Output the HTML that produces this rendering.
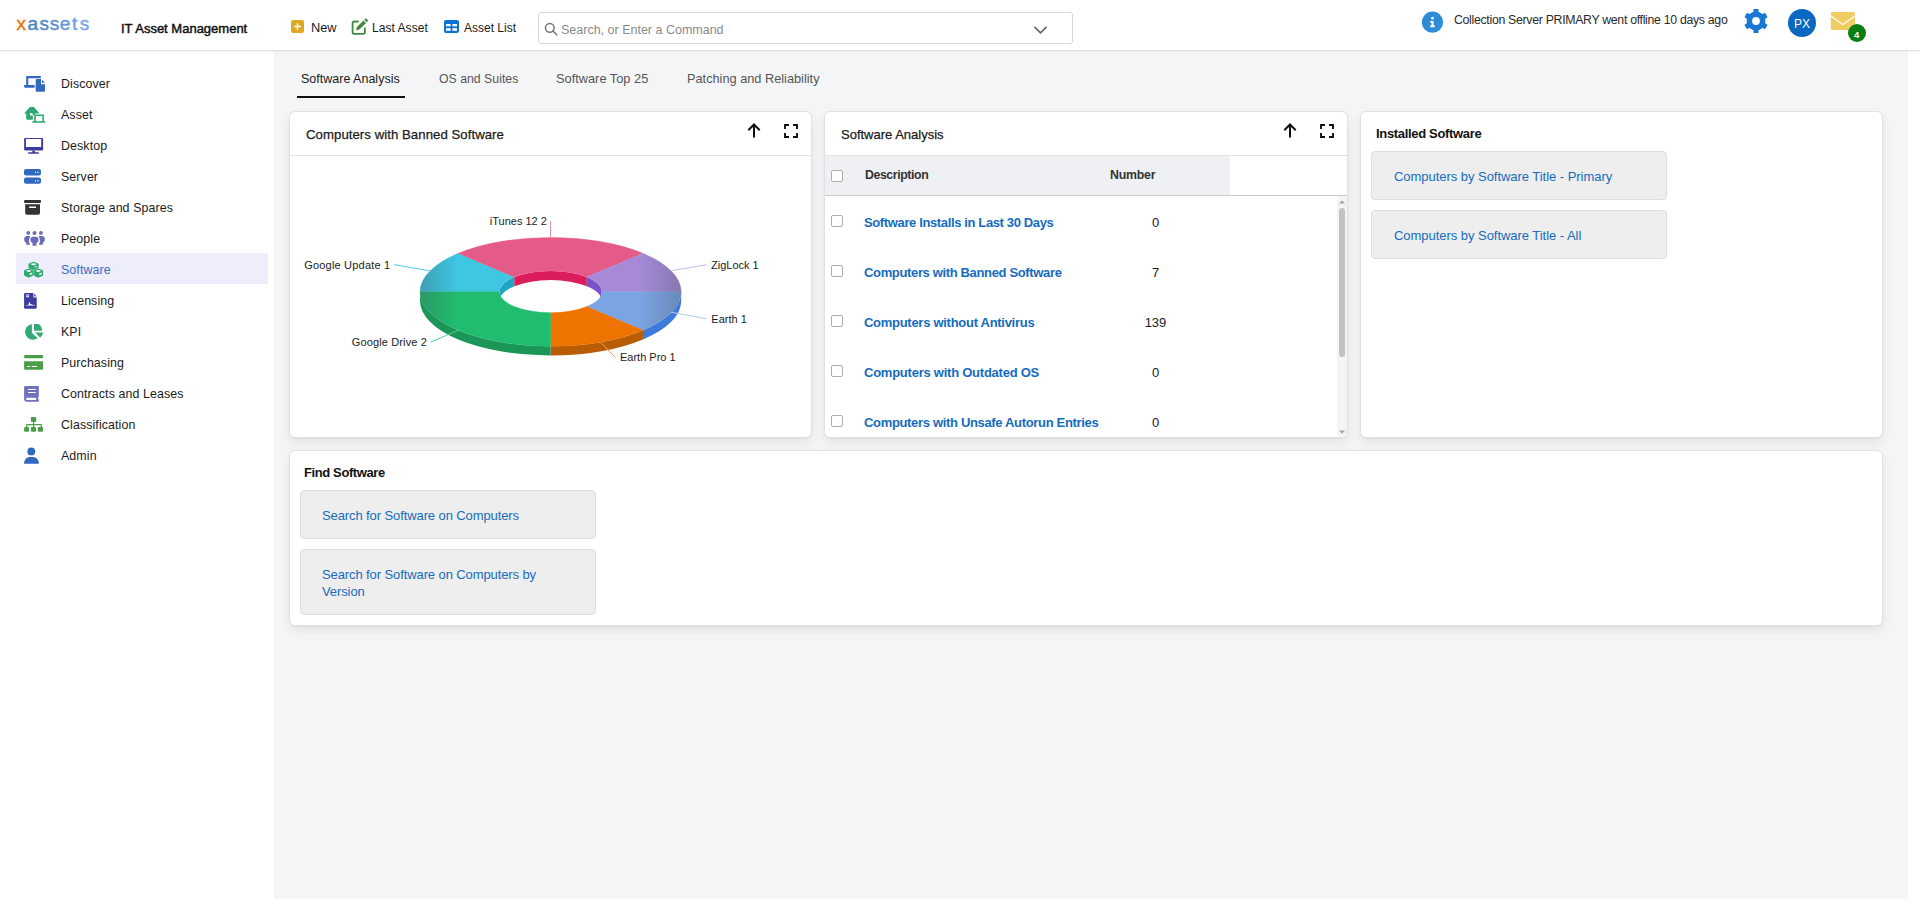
<!DOCTYPE html>
<html><head><meta charset="utf-8">
<style>
*{box-sizing:border-box;margin:0;padding:0}
html,body{width:1920px;height:911px;overflow:hidden;background:#fff;font-family:"Liberation Sans",sans-serif;color:#222}
.abs{position:absolute}
#hdr{position:absolute;left:0;top:0;width:1920px;height:51px;background:#fff;border-bottom:1px solid #e0dfdd;box-shadow:0 1px 2px rgba(0,0,0,0.04);z-index:2}
#main{position:absolute;left:274px;top:51px;width:1634px;height:848px;background:#f4f5f7}
.t{position:absolute;white-space:nowrap;line-height:1}
.side{position:absolute;left:16px;width:252px;height:31px}
.side .lbl{position:absolute;left:45px;top:10px;font-size:12.4px;line-height:14px;letter-spacing:0.1px;color:#1b1b1b}
.side.sel{background:#eeedfb}
.side.sel .lbl{color:#3a6cc4}
.side svg{position:absolute;left:8px;top:7px}
.card{position:absolute;background:#fff;border:1px solid #e3e1df;border-radius:6px;box-shadow:0 5px 12px rgba(0,0,0,0.07),0 1px 2px rgba(0,0,0,0.04)}
.tab{position:absolute;top:72px;font-size:12.6px;line-height:14px;color:#555}
.btn{position:absolute;background:#eeeeee;border:1px solid #dedede;border-radius:4px}
.lnk{color:#156cbe}
</style></head><body>
<div id="hdr">
<svg class="abs" style="left:0;top:0" width="100" height="40" viewBox="0 0 100 40" font-family="Liberation Sans" font-size="19"><text x="16.4" y="30" fill="#e8720c" stroke="#e8720c" stroke-width="0.4">x</text><text x="27.6" y="30" fill="#4a86c0" stroke="#4a86c0" stroke-width="0.4">a</text><text x="39.4" y="30" fill="#5089c6" stroke="#5089c6" stroke-width="0.4">s</text><text x="49.7" y="30" fill="#5a90cf" stroke="#5a90cf" stroke-width="0.4">s</text><text x="59.8" y="30" fill="#6599db" stroke="#6599db" stroke-width="0.4">e</text><text x="71.9" y="30" fill="#6f9fe3" stroke="#6f9fe3" stroke-width="0.4">t</text><text x="79.8" y="30" fill="#78a5ea" stroke="#78a5ea" stroke-width="0.4">s</text></svg>
<div class="t" style="left:121px;top:22px;font-size:13px;font-weight:400;-webkit-text-stroke:0.45px #111;color:#111;line-height:14px">IT Asset Management</div>
<svg class="abs" style="left:291px;top:20px" width="13" height="13" viewBox="0 0 13 13"><rect x="0" y="0" width="13" height="13" rx="2" fill="#dea823"/><path d="M6.5 3.2v6.6M3.2 6.5h6.6" stroke="#fff" stroke-width="1.4"/></svg>
<div class="t" style="left:311px;top:21px;font-size:12.8px;line-height:14px;color:#1b1b1b">New</div>
<svg class="abs" style="left:351px;top:18px" width="17" height="17" viewBox="0 0 17 17"><path d="M7 3.5H3.2a1.6 1.6 0 0 0-1.6 1.6v9.1a1.6 1.6 0 0 0 1.6 1.6h9.1a1.6 1.6 0 0 0 1.6-1.6V10.5" fill="none" stroke="#3d8a3d" stroke-width="1.8" stroke-linecap="round"/><path d="M5 12.5l0.9-3.4 6.6-6.6 2.5 2.5-6.6 6.6z" fill="#3d8a3d"/><path d="M13.3 1.7l0.9-0.9a1 1 0 0 1 1.4 0l1.1 1.1a1 1 0 0 1 0 1.4l-0.9 0.9z" fill="#3d8a3d"/></svg>
<div class="t" style="left:372px;top:21px;font-size:12.1px;line-height:14px;color:#1b1b1b">Last Asset</div>
<svg class="abs" style="left:444px;top:20px" width="15" height="13" viewBox="0 0 15 13"><rect x="0" y="0" width="15" height="13" rx="2" fill="#0a73d4"/><rect x="2" y="4" width="4.6" height="2.3" fill="#fff"/><rect x="8.4" y="4" width="4.6" height="2.3" fill="#fff"/><rect x="2" y="8.2" width="4.6" height="2.6" fill="#fff"/><rect x="8.4" y="8.2" width="4.6" height="2.6" fill="#fff"/></svg>
<div class="t" style="left:464px;top:21px;font-size:12px;line-height:14px;color:#1b1b1b">Asset List</div>
<div class="abs" style="left:538px;top:12px;width:535px;height:32px;border:1px solid #d9d9d9;border-radius:3px;background:#fff"></div>
<svg class="abs" style="left:544px;top:22px" width="14" height="14" viewBox="0 0 14 14"><circle cx="5.8" cy="5.8" r="4.4" fill="none" stroke="#777" stroke-width="1.5"/><path d="M9 9l3.8 3.8" stroke="#777" stroke-width="1.6" stroke-linecap="round"/></svg>
<div class="t" style="left:561px;top:23px;font-size:12.5px;line-height:14px;color:#8a8a8a">Search, or Enter a Command</div>
<svg class="abs" style="left:1033px;top:25px" width="15" height="10" viewBox="0 0 15 10"><path d="M1.5 1.8l6 6 6-6" fill="none" stroke="#666" stroke-width="1.7"/></svg>
<svg class="abs" style="left:1421px;top:11px" width="23" height="23" viewBox="0 0 23 23"><circle cx="11.5" cy="11.2" r="10.6" fill="#2e8bd6"/><circle cx="11.5" cy="7.2" r="1.4" fill="#fff"/><path d="M9.3 10h3.3v4.4h1.3v1.8H9.2v-1.8h1.3v-2.6H9.3z" fill="#fff"/></svg>
<div class="t" style="left:1454px;top:13px;font-size:12.3px;line-height:14px;letter-spacing:-0.3px;color:#2a2a2a">Collection Server PRIMARY went offline 10 days ago</div>
<svg class="abs" style="left:1744px;top:9px" width="24" height="24" viewBox="0 0 24 24"><path fill="#1a78d4" stroke="#1a78d4" stroke-width="1.2" stroke-linejoin="round" d="M15.30 3.84 L13.98 3.43 L14.00 0.67 L10.00 0.67 L10.02 3.43 L8.70 3.84 L6.58 5.07 L5.56 6.00 L3.19 4.61 L1.19 8.07 L3.58 9.43 L3.29 10.78 L3.29 13.22 L3.58 14.57 L1.19 15.93 L3.19 19.39 L5.56 18.00 L6.58 18.93 L8.70 20.16 L10.02 20.57 L10.00 23.33 L14.00 23.33 L13.98 20.57 L15.30 20.16 L17.42 18.93 L18.44 18.00 L20.81 19.39 L22.81 15.93 L20.42 14.57 L20.71 13.22 L20.71 10.78 L20.42 9.43 L22.81 8.07 L20.81 4.61 L18.44 6.00 L17.42 5.07Z"/><circle cx="12" cy="12" r="3.9" fill="#fff"/></svg>
<div class="abs" style="left:1788px;top:9px;width:28px;height:28px;border-radius:50%;background:#0a68c0"></div>
<div class="t" style="left:1794px;top:18px;font-size:12px;line-height:12px;color:#fff">PX</div>
<svg class="abs" style="left:1830px;top:12px" width="26" height="19" viewBox="0 0 26 19"><rect x="0.8" y="0" width="24.2" height="18" rx="1.5" fill="#f0cd62"/><path d="M0.8 4l12.1 8.5L25 4" fill="none" stroke="#fff" stroke-width="1.1"/></svg>
<div class="abs" style="left:1847.5px;top:23.5px;width:18px;height:18px;border-radius:50%;background:#0a8012"></div>
<div class="t" style="left:1854px;top:30px;font-size:9.5px;line-height:9px;color:#fff;font-weight:700">4</div>
</div>
<div class="side" style="top:67px"><svg width="26" height="24" viewBox="0 0 26 24" style="left:6px;top:5px"><g fill="#3168c0"><path d="M4.2 4.1h14.6v2.2H6.3v6.6H4.2z"/><path d="M2.1 12.9h10.5v2.9H3.4a1.3 1.3 0 0 1-1.3-1.3z"/><path d="M15 7.1h4v5.1h4V18.5a1.3 1.3 0 0 1-1.3 1.3h-6.7a1.3 1.3 0 0 1-1.3-1.3V8.4a1.3 1.3 0 0 1 1.3-1.3z"/><path d="M20 7.8l3 2.9h-3z"/></g></svg><div class="lbl">Discover</div></div>
<div class="side" style="top:98px"><svg width="26" height="24" viewBox="0 0 26 24" style="left:6px;top:5px"><g fill="#2ea870"><path d="M7.9 4h4l5.6 6.5H13V12h-2.5v-2H8v2.5h2.8v4.2H5.4a1.2 1.2 0 0 1-1.2-1.2V10.5H2.1z"/><path d="M12.2 11.6h9.7v6.6h1.5v1.6H10.3v-1.6h1.9zM13.8 13v5.2h6.5V13z" fill-rule="evenodd"/></g></svg><div class="lbl">Asset</div></div>
<div class="side" style="top:129px"><svg width="26" height="24" viewBox="0 0 26 24" style="left:6px;top:5px"><g fill="#3d3d9e"><path fill-rule="evenodd" d="M3.2 4h16.8a1.1 1.1 0 0 1 1.1 1.1v10.4a1.1 1.1 0 0 1-1.1 1.1H3.2a1.1 1.1 0 0 1-1.1-1.1V5.1A1.1 1.1 0 0 1 3.2 4zM3.9 5v8h15.3V5z"/><path d="M10.3 16.4h2.6v1.8h3.9v1.6H6.2v-1.6h4.1z"/></g></svg><div class="lbl">Desktop</div></div>
<div class="side" style="top:160px"><svg width="26" height="24" viewBox="0 0 26 24" style="left:6px;top:5px"><g fill="#3168c0"><path fill-rule="evenodd" d="M4 4h13a2 2 0 0 1 2 2v2.5a2 2 0 0 1-2 2H4a2 2 0 0 1-2-2V6a2 2 0 0 1 2-2zM13 6.8h1v1.2h-1zM15.3 6.8h1.4v1.2h-1.4z"/><path fill-rule="evenodd" d="M4 12.6h13a2 2 0 0 1 2 2v2.2a2 2 0 0 1-2 2H4a2 2 0 0 1-2-2v-2.2a2 2 0 0 1 2-2zM13 15.2h1v1.2h-1zM15.3 15.2h1.4v1.2h-1.4z"/></g></svg><div class="lbl">Server</div></div>
<div class="side" style="top:191px"><svg width="26" height="24" viewBox="0 0 26 24" style="left:6px;top:5px"><g fill="#333"><rect x="2.1" y="4" width="16.9" height="2.9" rx="0.8"/><path fill-rule="evenodd" d="M3.2 8.3h14.8v8.6a1.8 1.8 0 0 1-1.8 1.8H5a1.8 1.8 0 0 1-1.8-1.8zM7.2 10.4h6.8v1.7H7.2z"/></g></svg><div class="lbl">Storage and Spares</div></div>
<div class="side" style="top:222px"><svg width="26" height="24" viewBox="0 0 26 24" style="left:6px;top:5px"><g fill="#6b6bbb"><circle cx="6.3" cy="5.9" r="1.9"/><circle cx="12.5" cy="6" r="2"/><circle cx="18.9" cy="5.9" r="1.9"/><path d="M4.5 9h4l-1 2.2c-0.8 2 -0.8 3.8 0.4 5.5V17.7H4.2v-1.6c-1.2-0.8-2.1-2.3-2.1-3.8 0-1.8 1-3 2.4-3.3z"/><path d="M20.5 9h-4l1 2.2c0.8 2 0.8 3.8-0.4 5.5V17.7h3.7v-1.6c1.2-0.8 2.1-2.3 2.1-3.8 0-1.8-1-3-2.4-3.3z"/><path d="M10.5 9.8h4c1.3 0.3 2.1 1.5 2.1 3 0 1.4-0.8 2.6-2.1 3.2V18.7h-4V16c-1.3-0.6-2.1-1.8-2.1-3.2 0-1.5 0.8-2.7 2.1-3z"/></g></svg><div class="lbl">People</div></div>
<div class="side sel" style="top:253px"><svg width="26" height="24" viewBox="0 0 26 24" style="left:6px;top:5px"><g><path d="M11.55 4.3L16.1 5.9V9.7L11.55 11.6L7.0 9.7V5.9Z" fill="#2ea870" stroke="#2ea870" stroke-width="1" stroke-linejoin="round"/><path d="M11.55 5.3L14.900000000000002 6.1L11.55 7.5L8.2 6.1Z" fill="#fff"/><path d="M12.55 8.7L15.100000000000001 7.699999999999999V8.6L12.55 9.7Z" fill="#fff"/><path d="M6.75 11.0L10.9 12.6V17.3L6.75 19.2L2.6 17.3V12.6Z" fill="#2ea870" stroke="#2ea870" stroke-width="1" stroke-linejoin="round"/><path d="M6.75 12.0L9.700000000000001 12.8L6.75 14.2L3.8 12.8Z" fill="#fff"/><path d="M7.75 15.4L9.9 14.4V16.2L7.75 17.3Z" fill="#fff"/><path d="M16.3 11.0L20.6 12.6V17.3L16.3 19.2L12.1 17.3V12.6Z" fill="#2ea870" stroke="#2ea870" stroke-width="1" stroke-linejoin="round"/><path d="M16.3 12.0L19.400000000000002 12.8L16.3 14.2L13.299999999999999 12.8Z" fill="#fff"/><path d="M17.3 15.4L19.6 14.4V16.2L17.3 17.3Z" fill="#fff"/></g></svg><div class="lbl">Software</div></div>
<div class="side" style="top:284px"><svg width="26" height="24" viewBox="0 0 26 24" style="left:6px;top:5px"><g fill="#3b3b9e"><path fill-rule="evenodd" d="M3.1 3.9h8.3v4.5h3.3V18.7a1 1 0 0 1-1 1H3.1a1 1 0 0 1-1-1V4.9a1 1 0 0 1 1-1zM4 5.5h3.2v1H4zM4 7.3h3.2v1H4zM4 16.6h8.8v-0.6l-2.5-0.3-1-0.8-0.8 0.6-1-2.8-1.3 3.3-2.2 0z"/><path d="M12.3 4.2l2.1 3.3h-2.1z"/></g></svg><div class="lbl">Licensing</div></div>
<div class="side" style="top:315px"><svg width="26" height="24" viewBox="0 0 26 24" style="left:6px;top:5px"><g fill="#34ab74"><path d="M9.9 3.9V12.8l5.8 5.5A8.2 8.2 0 0 1 11.2 19.8 8 8 0 0 1 3 12 8.3 8.3 0 0 1 9.9 3.9z"/><path d="M12 3.9h4.6A7.5 7.5 0 0 1 20 10.7H12z"/><path d="M13.2 12.5H21a7.5 7.5 0 0 1-2.8 5.3z"/></g></svg><div class="lbl">KPI</div></div>
<div class="side" style="top:346px"><svg width="26" height="24" viewBox="0 0 26 24" style="left:6px;top:5px"><g fill="#4a9e4a"><rect x="2.1" y="3.9" width="18.9" height="3.3" rx="1"/><path fill-rule="evenodd" d="M2.1 10.3h18.9v7.5a1 1 0 0 1-1 1H3.1a1 1 0 0 1-1-1zM5 15h3v1H5zM9.7 15h5.3v1H9.7z"/></g></svg><div class="lbl">Purchasing</div></div>
<div class="side" style="top:377px"><svg width="26" height="24" viewBox="0 0 26 24" style="left:6px;top:5px"><g fill="#7272bc"><path fill-rule="evenodd" d="M3.3 3.9h13.5v10.8l-0.8 1.4 0.8 2.2v1.4H4.5a2.4 2.4 0 0 1-2.4-2.4V5.1a1.2 1.2 0 0 1 1.2-1.2zM4.3 15.7v2.3h9.8v-2.3zM6 7h7.8v1H6zM6 10h7.8v1H6z"/><path d="M6 8h7.8v2H6z" opacity="0.55"/></g></svg><div class="lbl">Contracts and Leases</div></div>
<div class="side" style="top:408px"><svg width="26" height="24" viewBox="0 0 26 24" style="left:6px;top:5px"><g fill="#4a9e4a"><rect x="8.9" y="3.9" width="5.3" height="5" rx="1"/><rect x="2.1" y="14" width="5" height="4.8" rx="1"/><rect x="8.9" y="14" width="5.1" height="4.8" rx="1"/><rect x="15.8" y="14" width="5.2" height="4.8" rx="1"/><path d="M11 8.5h1.2v2.6h6.8a1 1 0 0 1 1 1V14h-1.2v-1.7H12.2V14H11v-1.7H5.3V14H4.1v-1.9a1 1 0 0 1 1-1H11z"/></g></svg><div class="lbl">Classification</div></div>
<div class="side" style="top:439px"><svg width="26" height="24" viewBox="0 0 26 24" style="left:6px;top:5px"><g fill="#3068c0"><circle cx="9.3" cy="7.4" r="3.9"/><path d="M2.1 19.7c0-3.8 2.6-6.6 5.7-6.6h3.2c3.2 0 5.9 2.8 5.9 6.6z"/></g></svg><div class="lbl">Admin</div></div>
<div id="main"></div>
<div class="t" style="left:301px;top:72px;font-size:12.5px;line-height:14px;color:#1b1b1b">Software Analysis</div>
<div class="abs" style="left:297px;top:96px;width:108px;height:2px;background:#111"></div>
<div class="tab" style="left:439px;font-size:12.3px">OS and Suites</div>
<div class="tab" style="left:556px;font-size:12.8px">Software Top 25</div>
<div class="tab" style="left:687px;font-size:12.75px">Patching and Reliability</div>

<div class="card" style="left:289px;top:111px;width:523px;height:327px"></div>
<div class="t" style="left:306px;top:128px;font-size:13.2px;line-height:14px;color:#1b1b1b;letter-spacing:0.05px;-webkit-text-stroke:0.25px #1b1b1b">Computers with Banned Software</div>
<div class="abs" style="left:290px;top:155px;width:521px;height:1px;background:#e6e4e2"></div>
<svg class="abs" style="left:746px;top:123px" width="16" height="16" viewBox="0 0 16 16"><path d="M8 14.6V1.8M2.3 7.2L8 1.5l5.7 5.7" fill="none" stroke="#111" stroke-width="2"/></svg><svg class="abs" style="left:783px;top:123px" width="16" height="16" viewBox="0 0 16 16"><path d="M2 6V2h4M10 2h4v4M14 10v4h-4M6 14H2v-4" fill="none" stroke="#111" stroke-width="1.9"/></svg>
<div id="chart"><svg class="abs" style="left:0;top:0" width="1920" height="911" viewBox="0 0 1920 911"><defs>
<clipPath id="hole"><ellipse cx="550.6" cy="291.8" rx="51.2" ry="20.9"/></clipPath>
<linearGradient id="shade" gradientUnits="userSpaceOnUse" x1="420.0" y1="0" x2="681.2" y2="0">
<stop offset="0" stop-color="#404850" stop-opacity="0.32"/>
<stop offset="0.14" stop-color="#404850" stop-opacity="0"/>
<stop offset="0.84" stop-color="#404850" stop-opacity="0"/>
<stop offset="1" stop-color="#404850" stop-opacity="0.3"/>
</linearGradient></defs><path d="M642.95 330.27 A130.6 54.4 0 0 0 681.20 291.80 L681.20 301.00 A130.6 54.4 0 0 1 642.95 339.47 Z" fill="#3d7ad9"/><path d="M550.60 346.20 A130.6 54.4 0 0 0 642.95 330.27 L642.95 339.47 A130.6 54.4 0 0 1 550.60 355.40 Z" fill="#b85c05"/><path d="M420.00 291.80 A130.6 54.4 0 0 0 550.60 346.20 L550.60 355.40 A130.6 54.4 0 0 1 420.00 301.00 Z" fill="#1c9558"/><path d="M458.25 253.33 A130.6 54.4 0 0 0 420.00 291.80 L499.40 291.80 A51.2 20.9 0 0 1 514.40 277.02 Z" fill="#3ec6e2" stroke="#3ec6e2" stroke-width="0.4"/><path d="M642.95 253.33 A130.6 54.4 0 0 0 458.25 253.33 L514.40 277.02 A51.2 20.9 0 0 1 586.80 277.02 Z" fill="#e55b87" stroke="#e55b87" stroke-width="0.4"/><path d="M681.20 291.80 A130.6 54.4 0 0 0 642.95 253.33 L586.80 277.02 A51.2 20.9 0 0 1 601.80 291.80 Z" fill="#a68ad8" stroke="#a68ad8" stroke-width="0.4"/><path d="M642.95 330.27 A130.6 54.4 0 0 0 681.20 291.80 L601.80 291.80 A51.2 20.9 0 0 1 586.80 306.58 Z" fill="#7ba4e4" stroke="#7ba4e4" stroke-width="0.4"/><path d="M550.60 346.20 A130.6 54.4 0 0 0 642.95 330.27 L586.80 306.58 A51.2 20.9 0 0 1 550.60 312.70 Z" fill="#ef7300" stroke="#ef7300" stroke-width="0.4"/><path d="M420.00 291.80 A130.6 54.4 0 0 0 550.60 346.20 L550.60 312.70 A51.2 20.9 0 0 1 499.40 291.80 Z" fill="#20bd70" stroke="#20bd70" stroke-width="0.4"/><path d="M681.20 291.80 A130.6 54.4 0 1 0 420.00 291.80 A130.6 54.4 0 1 0 681.20 291.80 Z M601.80 291.80 A51.2 20.9 0 1 1 499.40 291.80 A51.2 20.9 0 1 1 601.80 291.80 Z" fill="url(#shade)" fill-rule="evenodd"/><g clip-path="url(#hole)"><path d="M514.40 277.02 A51.2 20.9 0 0 0 499.40 291.80 L499.40 301.00 A51.2 20.9 0 0 1 514.40 286.22 Z" fill="#1ea6c6"/><path d="M586.80 277.02 A51.2 20.9 0 0 0 514.40 277.02 L514.40 286.22 A51.2 20.9 0 0 1 586.80 286.22 Z" fill="#dc1d5c"/><path d="M601.80 291.80 A51.2 20.9 0 0 0 586.80 277.02 L586.80 286.22 A51.2 20.9 0 0 1 601.80 301.00 Z" fill="#7b52c9"/></g><path d="M550.5 221.5L550.5 237.5" stroke="#ea8cab" stroke-width="1"/><path d="M394 264.6L429.5 270.8" stroke="#58cde6" stroke-width="1"/><path d="M672.4 270.4L706.6 264.8" stroke="#c9b8ea" stroke-width="1"/><path d="M671 312.2L706.6 318.8" stroke="#b6cbf1" stroke-width="1"/><path d="M600.5 342.2L615.7 357.8" stroke="#f2a25a" stroke-width="1"/><path d="M430.8 342L458.9 330" stroke="#4fd393" stroke-width="1"/><text x="489.8" y="225.3" font-family="Liberation Sans" font-size="11" letter-spacing="0" fill="#1b1b1b">iTunes 12 2</text><text x="304.2" y="268.6" font-family="Liberation Sans" font-size="11" letter-spacing="0.2" fill="#1b1b1b">Google Update 1</text><text x="711" y="269.1" font-family="Liberation Sans" font-size="11" letter-spacing="0" fill="#1b1b1b">ZigLock 1</text><text x="711.3" y="322.9" font-family="Liberation Sans" font-size="11" letter-spacing="0" fill="#1b1b1b">Earth 1</text><text x="620" y="361.1" font-family="Liberation Sans" font-size="11" letter-spacing="0" fill="#1b1b1b">Earth Pro 1</text><text x="351.7" y="345.8" font-family="Liberation Sans" font-size="11" letter-spacing="0.14" fill="#1b1b1b">Google Drive 2</text></svg></div>

<div class="card" style="left:824px;top:111px;width:524px;height:327px;overflow:hidden"></div>
<div class="t" style="left:841px;top:128px;font-size:13px;line-height:14px;color:#1b1b1b;-webkit-text-stroke:0.25px #1b1b1b">Software Analysis</div><svg class="abs" style="left:1282px;top:123px" width="16" height="16" viewBox="0 0 16 16"><path d="M8 14.6V1.8M2.3 7.2L8 1.5l5.7 5.7" fill="none" stroke="#111" stroke-width="2"/></svg><svg class="abs" style="left:1319px;top:123px" width="16" height="16" viewBox="0 0 16 16"><path d="M2 6V2h4M10 2h4v4M14 10v4h-4M6 14H2v-4" fill="none" stroke="#111" stroke-width="1.9"/></svg>
<div class="abs" style="left:825px;top:155px;width:522px;height:1px;background:#e3e3e3"></div>
<div class="abs" style="left:825px;top:156px;width:405px;height:39px;background:#eef0f3"></div>
<div class="abs" style="left:825px;top:195px;width:522px;height:1px;background:#c9c9c9"></div>
<div class="abs" style="left:831px;top:170px;width:12px;height:12px;border:1px solid #adadad;border-radius:2px;background:#fff"></div>
<div class="t" style="left:865px;top:168px;font-size:12.3px;line-height:14px;font-weight:700;letter-spacing:-0.4px;color:#333">Description</div>
<div class="t" style="left:1110px;top:168px;font-size:12.3px;line-height:14px;font-weight:700;letter-spacing:-0.2px;color:#333">Number</div>
<div class="abs" style="left:831px;top:215px;width:12px;height:12px;border:1px solid #adadad;border-radius:2px;background:#fff"></div><div class="t lnk" style="left:864px;top:216px;font-size:13px;line-height:14px;font-weight:700;letter-spacing:-0.37px">Software Installs in Last 30 Days</div><div class="t" style="left:1105px;width:101px;text-align:center;top:216px;font-size:13px;line-height:14px;color:#1b1b1b">0</div><div class="abs" style="left:831px;top:265px;width:12px;height:12px;border:1px solid #adadad;border-radius:2px;background:#fff"></div><div class="t lnk" style="left:864px;top:266px;font-size:13px;line-height:14px;font-weight:700;letter-spacing:-0.35px">Computers with Banned Software</div><div class="t" style="left:1105px;width:101px;text-align:center;top:266px;font-size:13px;line-height:14px;color:#1b1b1b">7</div><div class="abs" style="left:831px;top:315px;width:12px;height:12px;border:1px solid #adadad;border-radius:2px;background:#fff"></div><div class="t lnk" style="left:864px;top:316px;font-size:13px;line-height:14px;font-weight:700;letter-spacing:-0.28px">Computers without Antivirus</div><div class="t" style="left:1105px;width:101px;text-align:center;top:316px;font-size:13px;line-height:14px;color:#1b1b1b">139</div><div class="abs" style="left:831px;top:365px;width:12px;height:12px;border:1px solid #adadad;border-radius:2px;background:#fff"></div><div class="t lnk" style="left:864px;top:366px;font-size:13px;line-height:14px;font-weight:700;letter-spacing:-0.24px">Computers with Outdated OS</div><div class="t" style="left:1105px;width:101px;text-align:center;top:366px;font-size:13px;line-height:14px;color:#1b1b1b">0</div><div class="abs" style="left:831px;top:415px;width:12px;height:12px;border:1px solid #adadad;border-radius:2px;background:#fff"></div><div class="t lnk" style="left:864px;top:416px;font-size:13px;line-height:14px;font-weight:700;letter-spacing:-0.33px">Computers with Unsafe Autorun Entries</div><div class="t" style="left:1105px;width:101px;text-align:center;top:416px;font-size:13px;line-height:14px;color:#1b1b1b">0</div>
<div class="abs" style="left:1337px;top:196px;width:10px;height:240px;background:#f4f4f4"></div>
<svg class="abs" style="left:1337px;top:198px" width="10" height="8" viewBox="0 0 10 8"><path d="M2 5.5h6L5 2.2z" fill="#a3a3a3"/></svg>
<div class="abs" style="left:1339px;top:208px;width:6px;height:149px;border-radius:3px;background:#c2c2c2"></div>
<svg class="abs" style="left:1337px;top:428px" width="10" height="8" viewBox="0 0 10 8"><path d="M2 2.5h6L5 5.8z" fill="#a3a3a3"/></svg>

<div class="card" style="left:1360px;top:111px;width:523px;height:327px"></div>
<div class="t" style="left:1376px;top:127px;font-size:13px;line-height:14px;font-weight:700;letter-spacing:-0.33px;color:#111">Installed Software</div>
<div class="btn" style="left:1371px;top:151px;width:296px;height:49px"></div>
<div class="t lnk" style="left:1394px;top:170px;font-size:13px;line-height:14px;letter-spacing:-0.04px">Computers by Software Title - Primary</div>
<div class="btn" style="left:1371px;top:210px;width:296px;height:49px"></div>
<div class="t lnk" style="left:1394px;top:229px;font-size:13px;line-height:14px;letter-spacing:-0.04px">Computers by Software Title - All</div>

<div class="card" style="left:289px;top:450px;width:1594px;height:176px"></div>
<div class="t" style="left:304px;top:466px;font-size:13px;line-height:14px;font-weight:700;letter-spacing:-0.39px;color:#111">Find Software</div>
<div class="btn" style="left:300px;top:490px;width:296px;height:49px"></div>
<div class="t lnk" style="left:322px;top:509px;font-size:13px;line-height:14px;letter-spacing:-0.1px">Search for Software on Computers</div>
<div class="btn" style="left:300px;top:549px;width:296px;height:66px"></div>
<div class="abs lnk" style="left:322px;top:566px;width:250px;font-size:13px;line-height:17px;letter-spacing:-0.1px">Search for Software on Computers by Version</div>

</body></html>
